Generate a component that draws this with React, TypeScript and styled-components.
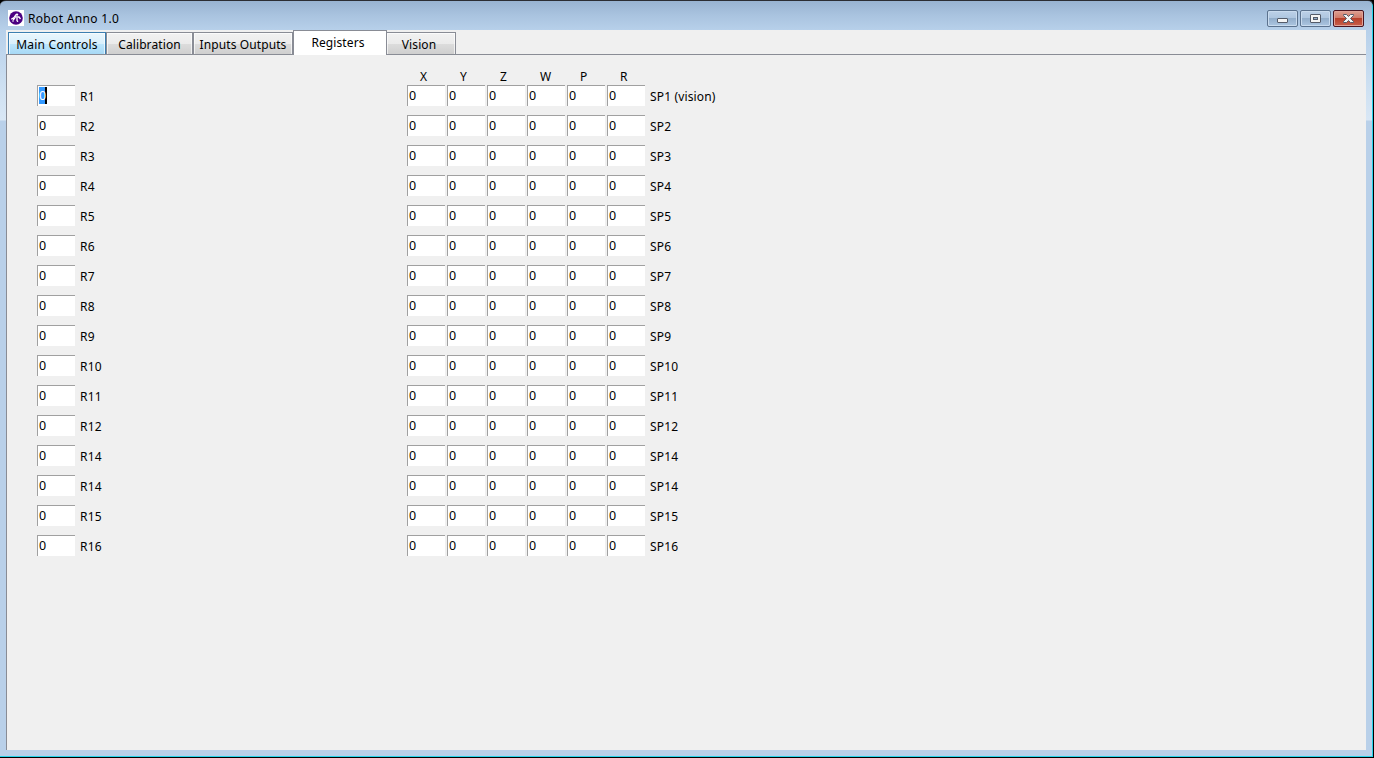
import React from "react";
import styled, { createGlobalStyle } from "styled-components";

const Global = createGlobalStyle`
  * { box-sizing: border-box; }
  body { margin: 0; background: #000; overflow: hidden; }
`;

const Window = styled.div`
  width: 1374px;
  height: 758px;
  display: flex;
  flex-direction: column;
  border-top: 1px solid #2b2d33;
  border-right: 1px solid #000;
  border-bottom: 1px solid #000;
  border-radius: 6px 6px 0 0;
  box-shadow: inset -1px -1px 0 #27d3ea;
  background:
    linear-gradient(#98b3d1 0, #a9c3df 14px, #b7d0ea 29px, transparent 29px),
    linear-gradient(#b7d0ea 29px, #cfe1f2 90px, #d9e7f5 119px, #b9d0e9 120px);
  font-family: "Noto Sans", "Open Sans", sans-serif;
  font-size: 12px;
  color: #000;
  overflow: hidden;
`;

const TitleBar = styled.header`
  height: 29px;
  flex: none;
  display: flex;
  align-items: flex-start;
  padding: 9px 9px 0 8px;
`;

const AppIcon = styled.svg`
  width: 16px;
  height: 16px;
  display: block;
`;

const Title = styled.span`
  margin-left: 4px;
  flex: 1;
  line-height: 18px;
  letter-spacing: 0.32px;
  white-space: nowrap;
`;

const Buttons = styled.div`
  display: flex;
  gap: 2px;
`;

const WindowButton = styled.button<{ $close?: boolean }>`
  width: 31px;
  height: 17px;
  padding: 0;
  display: flex;
  align-items: center;
  justify-content: center;
  border: 1px solid ${(p) => (p.$close ? "#4a1420" : "#5b728e")};
  border-radius: 2px;
  box-shadow: inset 0 0 0 1px ${(p) => (p.$close ? "#e0a297" : "#c9dbee")};
  background: ${(p) =>
    p.$close
      ? "linear-gradient(#dda092 0, #cf7665 50%, #b8402b 50%, #c8604c 100%)"
      : "linear-gradient(#bdd1e8 0, #adc5df 50%, #93aecb 50%, #acc6e1 100%)"};
`;

const Client = styled.main`
  width: 1360px;
  height: 720px;
  margin-left: 6px;
  display: flex;
  flex-direction: column;
  background: #f0f0f0;
`;

const TabBar = styled.nav`
  height: 25px;
  flex: none;
  display: flex;
  align-items: flex-end;
  padding-left: 2px;
  border-bottom: 1px solid #898c95;
`;

const Tab = styled.div<{ $width: number; $state?: "active" | "hot"; $joined?: boolean }>`
  width: ${(p) => p.$width}px;
  height: ${(p) => (p.$state === "active" ? 25 : 22)}px;
  margin-bottom: ${(p) => (p.$state === "active" ? -1 : 0)}px;
  line-height: ${(p) => (p.$state === "active" ? 24 : 23)}px;
  padding-right: ${(p) => (p.$state === "active" || p.$joined ? 4 : 0)}px;
  text-align: center;
  white-space: nowrap;
  letter-spacing: ${(p) => (p.$state === "hot" ? 0.22 : 0.1)}px;
  border: 1px solid ${(p) => (p.$state === "hot" ? "#3c7fb1" : "#898c95")};
  border-bottom: 0;
  border-left-width: ${(p) => (p.$joined ? 0 : 1)}px;
  box-shadow: ${(p) => (p.$state === "active" ? "none" : "inset 1px 1px 0 rgba(255,255,255,0.65), inset -1px 0 0 rgba(255,255,255,0.65)")};
  background: ${(p) =>
    p.$state === "active"
      ? "#fff"
      : p.$state === "hot"
        ? "linear-gradient(#eaf6fd 0, #d9f0fc 50%, #bee6fd 50%, #a7d9f5 100%)"
        : "linear-gradient(#f2f2f2 0, #ebebeb 50%, #dddddd 50%, #cfcfcf 100%)"};
`;

const Page = styled.section`
  flex: 1;
  display: flex;
  padding: 14px 0 0 30px;
  border-left: 1px solid #898c95;
`;

const RegisterColumn = styled.div`
  width: 370px;
  padding-top: 16px;
`;

const Headings = styled.div`
  height: 16px;
  display: flex;
  line-height: 15px;
`;

const Heading = styled.span`
  width: 40px;
  padding-left: 13px;
`;

const Row = styled.div`
  height: 30px;
  display: flex;
  align-items: flex-start;
`;

const Field = styled.div`
  width: 38px;
  height: 21px;
  margin-right: 2px;
  padding-left: 1px;
  line-height: 20px;
  font-size: 12.5px;
  background: #fff;
  border-top: 1px solid #a0a0a0;
  border-left: 1px solid #a0a0a0;
`;

const Selected = styled.span`
  display: block;
  width: 8px;
  height: 17px;
  margin-top: 1px;
  line-height: 18px;
  color: #fff;
  background: #3399ff;
  border-right: 2px solid #000;
`;

const Label = styled.span`
  margin-left: 3px;
  line-height: 23px;
  letter-spacing: 0.15px;
  white-space: nowrap;
`;

const numbers = [1, 2, 3, 4, 5, 6, 7, 8, 9, 10, 11, 12, 14, 14, 15, 16];
const axes = ["X", "Y", "Z", "W", "P", "R"];

export default function App() {
  return (
    <>
      <Global />
      <Window>
        <TitleBar>
          <AppIcon viewBox="0 0 16 16">
            <rect width="16" height="16" fill="#fff" />
            <circle cx="8" cy="8" r="6.8" fill="#4b0082" />
            <path d="M3.2 9.3 6 7.5 8 4.5M7 7h4l1.5 2M5 10l2-2M9 8v3" fill="none" stroke="#fff" strokeWidth="1.3" />
            <circle cx="9" cy="4.6" r="1.2" fill="#fff" />
            <circle cx="5" cy="11" r="0.8" fill="#fff" />
            <circle cx="9.5" cy="11.3" r="0.8" fill="#fff" />
          </AppIcon>
          <Title>Robot Anno 1.0</Title>
          <Buttons>
            <WindowButton aria-label="Minimize">
              <svg width="13" height="13" viewBox="0 0 13 13">
                <rect x="1.5" y="6.5" width="10" height="4" rx="0.5" fill="#f4f4f4" stroke="#545b69" />
              </svg>
            </WindowButton>
            <WindowButton aria-label="Maximize">
              <svg width="13" height="13" viewBox="0 0 13 13">
                <rect x="1.5" y="2.5" width="10" height="8" rx="0.5" fill="#f4f4f4" stroke="#545b69" />
                <rect x="4.5" y="5.5" width="4" height="2" fill="#91acc9" stroke="#545b69" />
              </svg>
            </WindowButton>
            <WindowButton $close aria-label="Close">
              <svg width="13" height="13" viewBox="0 0 13 13">
                <path d="M1.5 2.5h3l2 2 2-2h3v1l-3 3 3 3v1h-3l-2-2-2 2h-3v-1l3-3-3-3z" fill="#f4f4f4" stroke="#545b69" />
              </svg>
            </WindowButton>
          </Buttons>
        </TitleBar>
        <Client>
          <TabBar>
            <Tab $width={98} $state="hot">Main Controls</Tab>
            <Tab $width={87}>Calibration</Tab>
            <Tab $width={100}>Inputs Outputs</Tab>
            <Tab $width={94} $state="active">Registers</Tab>
            <Tab $width={69} $joined>Vision</Tab>
          </TabBar>
          <Page>
            <RegisterColumn>
              {numbers.map((n, i) => (
                <Row key={i}>
                  <Field>{i === 0 ? <Selected>0</Selected> : "0"}</Field>
                  <Label>R{n}</Label>
                </Row>
              ))}
            </RegisterColumn>
            <div>
              <Headings>
                {axes.map((name) => (
                  <Heading key={name}>{name}</Heading>
                ))}
              </Headings>
              {numbers.map((n, i) => (
                <Row key={i}>
                  {axes.map((name) => (
                    <Field key={name}>0</Field>
                  ))}
                  <Label>{`SP${n}${i === 0 ? " (vision)" : ""}`}</Label>
                </Row>
              ))}
            </div>
          </Page>
        </Client>
      </Window>
    </>
  );
}
